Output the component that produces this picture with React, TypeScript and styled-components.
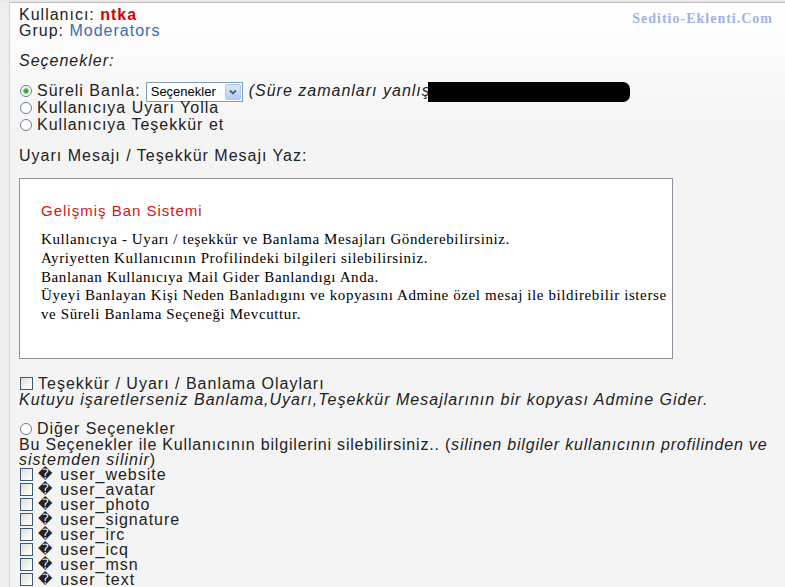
import * as React from 'react';
import styled, { createGlobalStyle } from 'styled-components';

const GlobalStyle = createGlobalStyle`
  html, body {
    margin: 0;
    padding: 0;
    background: #f4f4f4;
  }
  body {
    font-family: "Liberation Sans", Arial, sans-serif;
    font-size: 16px;
    letter-spacing: 1px;
    color: #222;
  }
`;

const Page = styled.div`
  display: flex;
  min-height: 100vh;
  padding-top: 2px;
  background: #e9e9e9;
  box-sizing: border-box;
`;

const Rail = styled.div`
  width: 9px;
  flex-shrink: 0;
  background: #efefef;
  border-right: 1px solid #d3d3d3;
`;

const Panel = styled.div`
  flex: 1;
  min-width: 0;
  overflow: hidden;
  border-top: 1px solid #bdbdbd;
  background: linear-gradient(to bottom, #ffffff 0, #f4f4f4 130px, #f4f4f4 100%);
  padding: 4px 0 0 9px;
  line-height: 15px;
`;

const Header = styled.div`
  display: flex;
  justify-content: space-between;
  align-items: flex-start;
`;

const UserInfo = styled.div`
  line-height: 16px;
`;

const UserName = styled.span`
  color: #d40000;
  font-weight: bold;
`;

const GroupName = styled.span`
  color: #3a6ea5;
`;

const Brand = styled.div`
  font-family: "Liberation Serif", "Times New Roman", serif;
  font-weight: bold;
  font-size: 14px;
  color: #9fb2e9;
  padding: 4px 12px 0 0;
`;

const SectionLabel = styled.div`
  font-style: italic;
  margin-top: 14px;
`;

const Options = styled.div`
  margin-top: 14px;
`;

const RadioRow = styled.div<{ $gap?: number }>`
  display: flex;
  align-items: center;
  height: 17px;
  white-space: nowrap;
  margin-top: ${p => p.$gap || 0}px;
`;

const Radio = styled.span<{ $checked?: boolean }>`
  width: 10px;
  height: 10px;
  border: 1px solid #6f7f8f;
  border-radius: 50%;
  background: ${p => p.$checked
    ? 'radial-gradient(circle, #2d9a2d 0, #45b745 2px, #c7e9c7 3px, #fff 4px)'
    : '#fff'};
  margin: 0 5px 0 1px;
  flex-shrink: 0;
`;

const FakeSelect = styled.span`
  display: inline-flex;
  align-items: center;
  justify-content: space-between;
  box-sizing: border-box;
  width: 97px;
  height: 20px;
  margin: 2px 6px 0 5px;
  padding: 0 1px 0 4px;
  border: 1px solid #7f9db9;
  background: #fff;
  font-size: 13px;
  letter-spacing: 0;
  color: #000;
`;

const SelectArrow = styled.span`
  display: flex;
  align-items: center;
  justify-content: center;
  width: 16px;
  height: 16px;
  border-radius: 2px;
  background: linear-gradient(to bottom, #dbe6fd 0, #b7cbf6 100%);
  border: 1px solid #b3c6f0;
  box-sizing: border-box;
`;

const Note = styled.span`
  font-style: italic;
`;

const Redacted = styled.span`
  display: inline-block;
  width: 202px;
  height: 20px;
  margin: 2px 0 0 -3px;
  background: #000;
  border-radius: 0 7px 7px 0;
`;

const Heading = styled.div`
  margin-top: 15px;
`;

const MessageBox = styled.div`
  width: 654px;
  height: 181px;
  box-sizing: border-box;
  margin-top: 15px;
  padding: 23px 0 0 21px;
  background: #fff;
  border: 1px solid #8c95a0;
`;

const MessageTitle = styled.div`
  color: #d01515;
  font-size: 15px;
  line-height: 18px;
`;

const MessageBody = styled.div`
  margin-top: 10px;
  font-family: "Liberation Serif", "Times New Roman", serif;
  font-size: 15px;
  line-height: 18.8px;
  letter-spacing: 0.6px;
  white-space: nowrap;
  color: #000;
`;

const CheckRow = styled.div`
  display: flex;
  align-items: center;
  height: 17px;
  white-space: nowrap;
  margin-top: 16px;
`;

const Check = styled.span`
  width: 11px;
  height: 11px;
  border: 1px solid #3d5a78;
  background: linear-gradient(135deg, #dcdcd6 0, #f4f4f2 60%, #fff 100%);
  margin: 0 5px 0 1px;
  flex-shrink: 0;
`;

const Hint = styled.div`
  font-style: italic;
  white-space: nowrap;
`;

const Plain = styled.div<{ $tight?: boolean }>`
  white-space: nowrap;
  letter-spacing: ${p => (p.$tight ? '0.8px' : '1px')};
`;

const FieldRow = styled.div`
  display: flex;
  align-items: center;
  height: 15px;
  white-space: nowrap;
`;

const Marker = styled.span`
  font-family: "DejaVu Sans", sans-serif;
  font-size: 14px;
  letter-spacing: 0;
  margin: 0 8px 0 0;
`;

const profileFields = [
  'user_website',
  'user_avatar',
  'user_photo',
  'user_signature',
  'user_irc',
  'user_icq',
  'user_msn',
  'user_text',
];

export default function App() {
  return (
    <>
      <GlobalStyle />
      <Page>
        <Rail />
        <Panel>
          <Header>
            <UserInfo>
              Kullanıcı: <UserName>ntka</UserName>
              <br />
              Grup: <GroupName>Moderators</GroupName>
            </UserInfo>
            <Brand>Seditio-Eklenti.Com</Brand>
          </Header>

          <SectionLabel>Seçenekler:</SectionLabel>

          <Options>
            <RadioRow>
              <Radio $checked />
              Süreli Banla:
              <FakeSelect>
                Seçenekler
                <SelectArrow>
                  <svg width="8" height="6" viewBox="0 0 8 6">
                    <path d="M1 1.5 L4 4.5 L7 1.5" fill="none" stroke="#4d6185" strokeWidth="1.8" />
                  </svg>
                </SelectArrow>
              </FakeSelect>
              <Note>(Süre zamanları yanlış</Note>
              <Redacted />
            </RadioRow>
            <RadioRow>
              <Radio />
              Kullanıcıya Uyarı Yolla
            </RadioRow>
            <RadioRow>
              <Radio />
              Kullanıcıya Teşekkür et
            </RadioRow>
          </Options>

          <Heading>Uyarı Mesajı / Teşekkür Mesajı Yaz:</Heading>

          <MessageBox>
            <MessageTitle>Gelişmiş Ban Sistemi</MessageTitle>
            <MessageBody>
              Kullanıcıya - Uyarı / teşekkür ve Banlama Mesajları Gönderebilirsiniz.<br />
              Ayriyetten Kullanıcının Profilindeki bilgileri silebilirsiniz.<br />
              Banlanan Kullanıcıya Mail Gider Banlandıgı Anda.<br />
              Üyeyi Banlayan Kişi Neden Banladıgını ve kopyasını Admine özel mesaj ile bildirebilir isterse<br />
              ve Süreli Banlama Seçeneği Mevcuttur.
            </MessageBody>
          </MessageBox>

          <CheckRow>
            <Check />
            Teşekkür / Uyarı / Banlama Olayları
          </CheckRow>
          <Hint>Kutuyu işaretlerseniz Banlama,Uyarı,Teşekkür Mesajlarının bir kopyası Admine Gider.</Hint>

          <RadioRow $gap={13}>
            <Radio />
            Diğer Seçenekler
          </RadioRow>
          <Plain $tight>
            Bu Seçenekler ile Kullanıcının bilgilerini silebilirsiniz.. (<Note>silinen bilgiler kullanıcının profilinden ve</Note>
          </Plain>
          <Plain>
            <Note>sistemden silinir</Note>)
          </Plain>
          {profileFields.map(f => (
            <FieldRow key={f}>
              <Check />
              <Marker>{'\uFFFD'}</Marker>
              {f}
            </FieldRow>
          ))}
        </Panel>
      </Page>
    </>
  );
}
